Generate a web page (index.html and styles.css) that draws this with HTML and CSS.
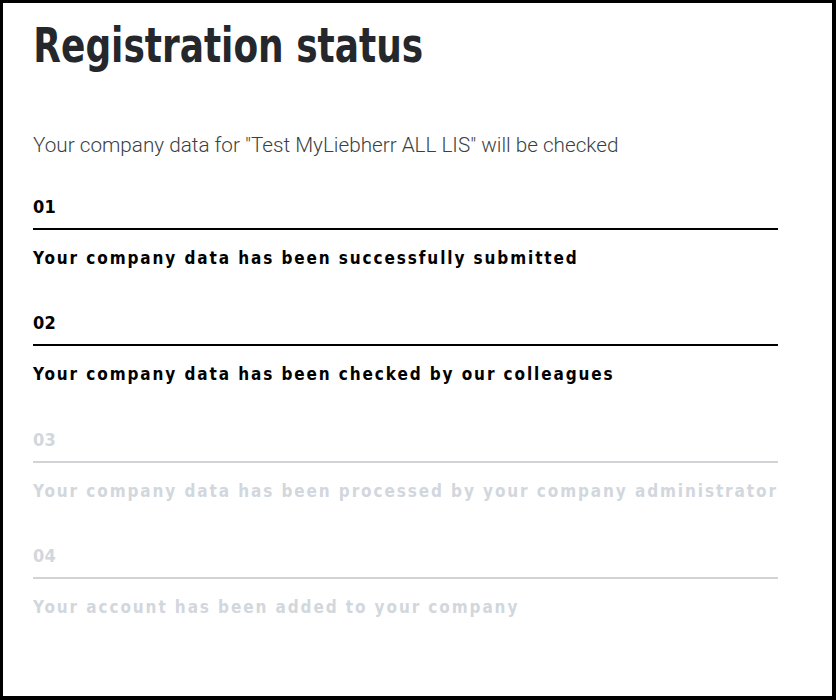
FILE: index.html
```html
<!DOCTYPE html>
<html lang="en">
<head>
<meta charset="utf-8">
<title>Registration status</title>
<link rel="stylesheet" href="styles.css">
</head>
<body>
<main class="page">
  <h1 class="title">Registration status</h1>
  <p class="intro">Your company data for "Test MyLiebherr ALL LIS" will be checked</p>
  <ol class="steps">
    <li class="step done">
      <div class="step-num">01</div>
      <div class="step-text">Your company data has been successfully submitted</div>
    </li>
    <li class="step done">
      <div class="step-num">02</div>
      <div class="step-text">Your company data has been checked by our colleagues</div>
    </li>
    <li class="step">
      <div class="step-num">03</div>
      <div class="step-text">Your company data has been processed by your company administrator</div>
    </li>
    <li class="step">
      <div class="step-num">04</div>
      <div class="step-text">Your account has been added to your company</div>
    </li>
  </ol>
</main>
</body>
</html>
```

FILE: styles.css
```css
html, body {
  margin: 0;
  padding: 0;
  background: #fff;
}
body {
  height: 700px;
  box-sizing: border-box;
  border-style: solid;
  border-color: #000;
  border-width: 3px 4px 4px 3px;
  overflow: hidden;
}
.page {
  padding: 0 54px 0 30px;
  font-family: "DejaVu Sans Condensed", "DejaVu Sans", sans-serif;
}
.title {
  margin: 0;
  padding-top: 14px;
  font-size: 48px;
  line-height: 56px;
  font-weight: 700;
  color: #24272b;
  white-space: nowrap;
  transform: scaleX(0.832);
  transform-origin: 2px 0;
}
.intro {
  margin: 60px 0 0;
  font-family: Roboto, "Liberation Sans", sans-serif;
  font-weight: 300;
  font-size: 20.7px;
  line-height: 24px;
  color: #3b3f44;
}
.steps {
  list-style: none;
  margin: 40px 0 0;
  padding: 0;
}
.step {
  margin-bottom: 43.4px;
  color: #d2d7dd;
}
.step.done {
  color: #000;
}
.step-num {
  font-size: 18px;
  font-weight: 700;
  line-height: 20px;
  letter-spacing: 0.3px;
  padding-bottom: 11px;
  border-bottom: 2px solid #d1d3d6;
}
.step.done .step-num {
  border-bottom-color: #000;
}
.step-text {
  margin-top: 16px;
  font-size: 17px;
  font-weight: 700;
  line-height: 24px;
  letter-spacing: 1.9px;
  white-space: nowrap;
}
```
